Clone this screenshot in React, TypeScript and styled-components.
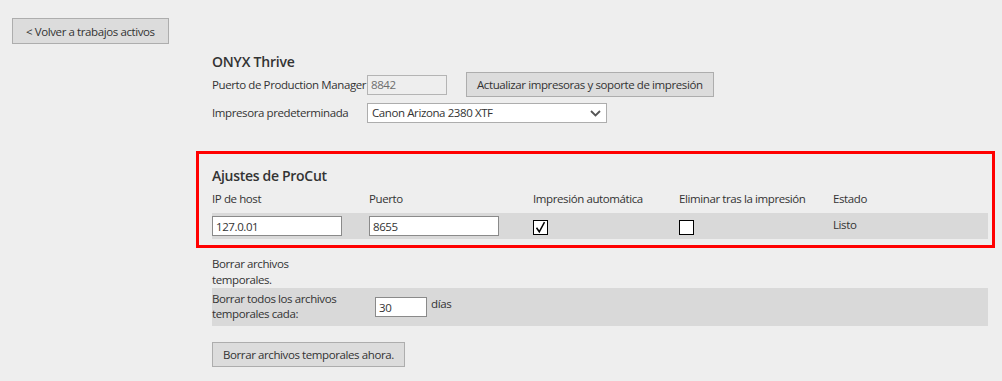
import styled, { createGlobalStyle } from "styled-components";

const GlobalStyle = createGlobalStyle`
  body {
    margin: 0;
    background: #eeeeee;
    font-family: "Open Sans", "Noto Sans", sans-serif;
    font-size: 11.5px;
    letter-spacing: -0.4px;
    line-height: 16px;
    color: #333333;
  }
`;

const Page = styled.div`
  padding: 18px 12px;
`;

const GrayButton = styled.button<{ $pad?: number }>`
  display: inline-block;
  height: ${(p) => (p.$pad ? 26 : 25)}px;
  padding: 0 ${(p) => p.$pad ?? 10}px;
  background: #dcdcdc;
  border: 1px solid #adadad;
  font-family: inherit;
  font-size: 11.5px;
  letter-spacing: -0.4px;
  color: #333;
  cursor: pointer;
`;

const Main = styled.div`
  margin-left: 200px;
  width: 776px;
`;

const Title = styled.h2`
  margin: 9px 0 1px;
  font-size: 14px;
  line-height: 18px;
  letter-spacing: -0.2px;
  font-weight: 600;
  color: #333;
`;

const SubTitle = styled.h3`
  margin: 13px 0 6px;
  font-size: 14px;
  line-height: 18px;
  letter-spacing: -0.3px;
  font-weight: 600;
  color: #333;
`;

const FormRow = styled.div<{ $gap?: number }>`
  display: flex;
  align-items: center;
  margin-bottom: ${(p) => p.$gap ?? 0}px;
`;

const Label = styled.span<{ $w: number }>`
  width: ${(p) => p.$w}px;
  flex-shrink: 0;
  white-space: nowrap;
`;

const TextInput = styled.input<{ $w: number; $disabled?: boolean }>`
  box-sizing: border-box;
  width: ${(p) => p.$w}px;
  height: 20px;
  padding: 0 3px;
  border: 1px solid ${(p) => (p.$disabled ? "#b4b4b4" : "#8a8a8a")};
  background: ${(p) => (p.$disabled ? "#eeeeee" : "#ffffff")};
  color: ${(p) => (p.$disabled ? "#6d6d6d" : "#333")};
  font-family: inherit;
  font-size: 11.5px;
  letter-spacing: -0.4px;
  outline: none;
`;

const Select = styled.div`
  box-sizing: border-box;
  width: 240px;
  height: 20px;
  display: flex;
  align-items: center;
  justify-content: space-between;
  padding: 0 5px 0 4px;
  background: #fff;
  border: 1px solid #adadad;
  color: #333;
`;

const Highlight = styled.div`
  margin: 28px -7px 0 -16px;
  border: 3px solid #ff0000;
  padding: 0 4px 6px 13px;
`;

const columns = "157px 164px 146px 154px 1fr";

const Grid = styled.div`
  display: grid;
  grid-template-columns: ${columns};
  margin-bottom: 6px;
`;

const Band = styled.div`
  background: #d9d9d9;
`;

const BandRow = styled(Band)`
  display: grid;
  grid-template-columns: ${columns};
  align-items: center;
  height: 26px;
`;

const Check = styled.span`
  box-sizing: border-box;
  display: inline-flex;
  align-items: center;
  justify-content: center;
  width: 15px;
  height: 15px;
  margin-top: 3px;
  background: #fff;
  border: 1px solid #000;
`;

const Status = styled.span`
  margin-top: -2px;
`;

const Narrow = styled.div`
  width: 100px;
  margin-top: 8px;
`;

const CleanRow = styled(Band)`
  display: flex;
  align-items: center;
  height: 38px;
`;

const CleanLabel = styled.div`
  width: 163px;
  line-height: 15px;
  align-self: flex-start;
  padding-top: 3px;
`;

const Unit = styled.span`
  margin-left: 4px;
  align-self: flex-start;
  padding-top: 8px;
`;

const Bottom = styled.div`
  margin-top: 16px;
`;

function App() {
  return (
    <Page>
      <GlobalStyle />
      <GrayButton $pad={13}>&lt; Volver a trabajos activos</GrayButton>
      <Main>
        <Title>ONYX Thrive</Title>
        <FormRow $gap={6}>
          <Label $w={155}>Puerto de Production Manager</Label>
          <TextInput $w={80} $disabled readOnly value="8842" />
          <GrayButton style={{ marginLeft: 19 }}>
            Actualizar impresoras y soporte de impresión
          </GrayButton>
        </FormRow>
        <FormRow>
          <Label $w={155}>Impresora predeterminada</Label>
          <Select>
            <span>Canon Arizona 2380 XTF</span>
            <svg width="11" height="7" viewBox="0 0 11 7">
              <path d="M1 1l4.5 4.5L10 1" fill="none" stroke="#555" strokeWidth="1.8" />
            </svg>
          </Select>
        </FormRow>

        <Highlight>
          <SubTitle>Ajustes de ProCut</SubTitle>
          <Grid>
            <span>IP de host</span>
            <span>Puerto</span>
            <span>Impresión automática</span>
            <span>Eliminar tras la impresión</span>
            <span>Estado</span>
          </Grid>
          <BandRow>
            <TextInput $w={130} readOnly value="127.0.01" />
            <TextInput $w={130} readOnly value="8655" />
            <Check>
              <svg width="13" height="13" viewBox="0 0 13 13">
                <path d="M2.5 6.8l2.8 4L10.5 1.2" fill="none" stroke="#000" strokeWidth="1.5" />
              </svg>
            </Check>
            <Check />
            <Status>Listo</Status>
          </BandRow>
        </Highlight>

        <Narrow>Borrar archivos temporales.</Narrow>
        <CleanRow>
          <CleanLabel>Borrar todos los archivos temporales cada:</CleanLabel>
          <TextInput $w={52} readOnly value="30" />
          <Unit>días</Unit>
        </CleanRow>
        <Bottom>
          <GrayButton>Borrar archivos temporales ahora.</GrayButton>
        </Bottom>
      </Main>
    </Page>
  );
}

export default App;
